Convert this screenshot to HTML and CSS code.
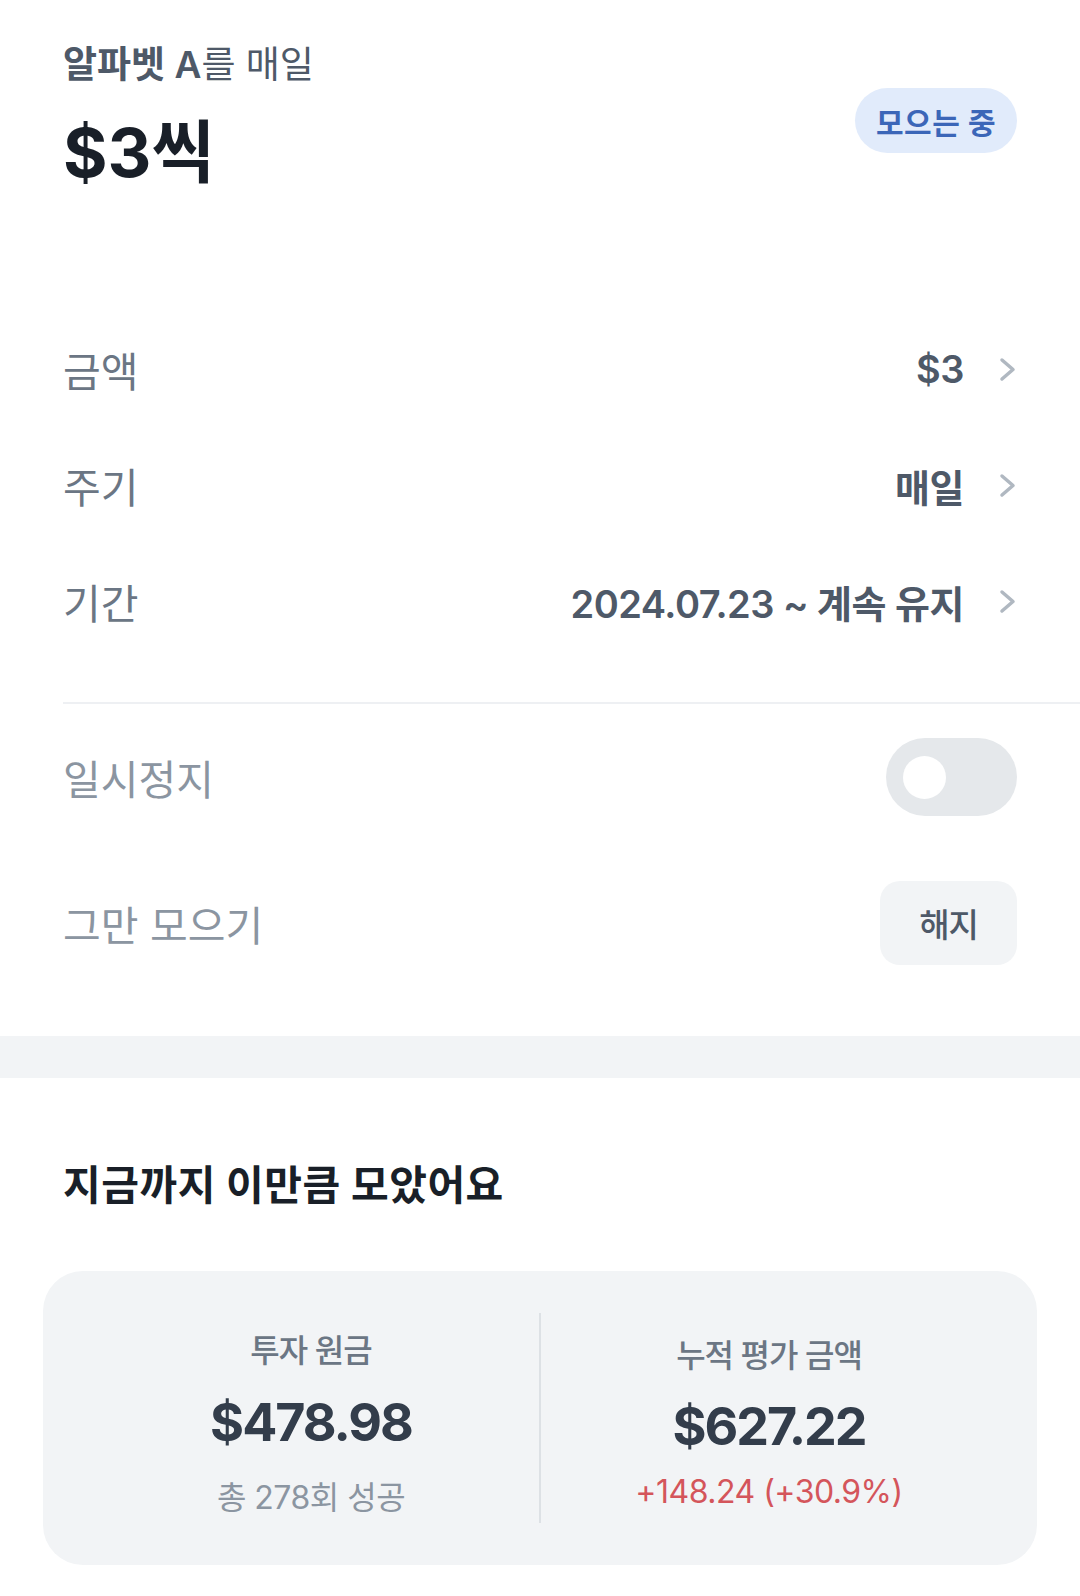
FILE: index.html
```html
<!DOCTYPE html>
<html lang="ko">
<head>
    <meta charset="UTF-8">
    <meta name="viewport" content="width=device-width, initial-scale=1.0">
    <title>모으기 상세</title>
    <link rel="stylesheet" href="styles.css">
</head>
<body>

    <!-- 요약 -->
    <section class="summary">
        <div class="summary-text">
            <div class="summary-title"><strong>알파벳 A</strong>를 매일</div>
            <div class="summary-amount">$3씩</div>
        </div>
        <span class="status-badge">모으는 중</span>
    </section>

    <!-- 설정 목록 -->
    <section class="settings">
        <div class="setting-row">
            <span class="setting-label">금액</span>
            <span class="setting-value">$3
                <svg class="chevron" width="17" height="25" viewBox="0 0 17 25"><polyline points="3,3 14,12.5 3,22" /></svg>
            </span>
        </div>
        <div class="setting-row">
            <span class="setting-label">주기</span>
            <span class="setting-value">매일
                <svg class="chevron" width="17" height="25" viewBox="0 0 17 25"><polyline points="3,3 14,12.5 3,22" /></svg>
            </span>
        </div>
        <div class="setting-row">
            <span class="setting-label">기간</span>
            <span class="setting-value">2024.07.23 ~ 계속 유지
                <svg class="chevron" width="17" height="25" viewBox="0 0 17 25"><polyline points="3,3 14,12.5 3,22" /></svg>
            </span>
        </div>
    </section>

    <div class="divider"></div>

    <section class="controls">
        <div class="control-row">
            <span class="control-label">일시정지</span>
            <div class="toggle"><span class="toggle-knob"></span></div>
        </div>
        <div class="control-row">
            <span class="control-label">그만 모으기</span>
            <button class="cancel-btn">해지</button>
        </div>
    </section>

    <div class="section-gap"></div>

    <!-- 누적 현황 -->
    <section class="history">
        <h2 class="history-title">지금까지 이만큼 모았어요</h2>
        <div class="stats-card">
            <div class="stat stat-left">
                <span class="stat-label">투자 원금</span>
                <span class="stat-value">$478.98</span>
                <span class="stat-sub">총 278회 성공</span>
            </div>
            <div class="stat-divider"></div>
            <div class="stat stat-right">
                <span class="stat-label">누적 평가 금액</span>
                <span class="stat-value">$627.22</span>
                <span class="stat-change">+148.24 (+30.9%)</span>
            </div>
        </div>
    </section>

</body>
</html>
```

FILE: styles.css
```css
body {
    margin: 0;
    padding: 0;
    background-color: #fff;
    font-family: Inter, "Noto Sans CJK KR", sans-serif;
    color: #191f28;
}

/* 요약 */
.summary {
    display: flex;
    justify-content: space-between;
    align-items: flex-start;
    padding: 40px 63px 0;
}

.summary-title {
    font-size: 37px;
    line-height: 50px;
    color: #4e5968;
    letter-spacing: 0;
}

.summary-title strong {
    font-weight: 600;
}

.summary-amount {
    margin-top: 22px;
    font-size: 68px;
    line-height: 80px;
    font-weight: 700;
    letter-spacing: 0;
}

.status-badge {
    margin-top: 48px;
    width: 162px;
    height: 65px;
    border-radius: 33px;
    background-color: #e1ebfb;
    color: #3b66b8;
    font-size: 30px;
    font-weight: 700;
    letter-spacing: 0.5px;
    display: flex;
    justify-content: center;
    align-items: center;
}

/* 설정 목록 */
.settings {
    margin-top: 119px;
    padding: 0 63px 43px;
}

.setting-row {
    height: 116px;
    display: flex;
    justify-content: space-between;
    align-items: center;
}

.setting-label {
    font-size: 41px;
    color: #6b7684;
    letter-spacing: 0;
}

.setting-value {
    display: flex;
    align-items: center;
    gap: 35px;
    font-size: 38px;
    font-weight: 600;
    color: #4e5968;
    letter-spacing: -0.5px;
}

.chevron {
    margin-right: 1px;
}

.chevron polyline {
    fill: none;
    stroke: #b0b8c1;
    stroke-width: 3.5;
    stroke-linecap: round;
    stroke-linejoin: round;
}

.divider {
    height: 2px;
    margin-left: 63px;
    background-color: #eef0f3;
}

.controls {
    padding: 0 63px 40px;
}

.control-row {
    height: 146px;
    display: flex;
    justify-content: space-between;
    align-items: center;
}

.control-label {
    font-size: 41px;
    color: #8b95a1;
    letter-spacing: 0;
}

.toggle {
    width: 131px;
    height: 78px;
    border-radius: 39px;
    background-color: #e5e8eb;
    display: flex;
    align-items: center;
}

.toggle-knob {
    width: 43px;
    height: 43px;
    margin-left: 17px;
    border-radius: 50%;
    background-color: #fff;
}

.cancel-btn {
    width: 137px;
    height: 84px;
    border: none;
    border-radius: 20px;
    background-color: #f2f4f6;
    font-family: inherit;
    font-size: 33px;
    font-weight: 500;
    color: #4e5968;
    letter-spacing: -1px;
    padding: 0;
}

.section-gap {
    height: 42px;
    background-color: #f2f4f6;
}

/* 누적 현황 */
.history {
    padding: 81px 43px 31px;
}

.history-title {
    margin: 0 0 60px 20px;
    font-size: 41px;
    line-height: 52px;
    font-weight: 700;
    letter-spacing: 0.5px;
    color: #191f28;
}

.stats-card {
    height: 294px;
    box-sizing: border-box;
    padding: 12px 40px 0;
    border-radius: 40px;
    background-color: #f2f4f6;
    display: flex;
    align-items: center;
}

.stat {
    flex: 1;
    display: flex;
    flex-direction: column;
    align-items: center;
}

.stat-divider {
    width: 2px;
    height: 210px;
    margin-top: -12px;
    background-color: #dde1e5;
}

.stat-label {
    font-size: 32px;
    line-height: 40px;
    font-weight: 500;
    color: #6b7684;
    letter-spacing: -1px;
}

.stat-value {
    font-size: 52px;
    line-height: 60px;
    font-weight: 700;
    color: #333d4b;
    letter-spacing: -2px;
}

.stat-left .stat-value {
    margin-top: 22px;
}

.stat-right .stat-value {
    margin-top: 21px;
}

.stat-sub {
    margin-top: 25px;
    font-size: 32px;
    line-height: 40px;
    color: #8b95a1;
    letter-spacing: -0.5px;
}

.stat-change {
    margin-top: 15px;
    font-size: 32px;
    line-height: 40px;
    color: #d4555b;
    letter-spacing: -0.5px;
}
```
